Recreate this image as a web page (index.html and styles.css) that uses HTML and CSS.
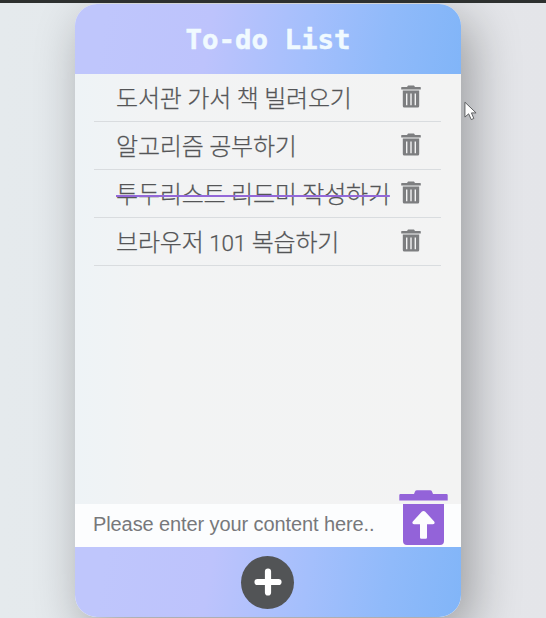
FILE: index.html
```html
<!DOCTYPE html>
<html lang="ko">
<head>
<meta charset="utf-8">
<title>To-do List</title>
<link rel="stylesheet" href="styles.css">
</head>
<body>
<svg class="defs" aria-hidden="true">
  <symbol id="trash" viewBox="0 0 20 23">
    <path fill-rule="evenodd" d="M0.8 2H6l1-1.4h6L14 2h5.2q.6 0 .6.6v2H.2v-2q0-.6.6-.6zM1.8 5.400h16.4V21q0 1.500-1.500 1.500H3.300Q1.800 22.500 1.800 21zM5 8.400v11.800h1.400V8.400zM9.300 8.400v11.800h1.400V8.400zM13.600 8.400v11.800H15V8.400z"/>
  </symbol>
</svg>
<main class="card">
  <header class="header"><h1 class="title">To-do List</h1></header>
  <ul class="list">
    <li class="item"><span class="text">도서관 가서 책 빌려오기</span><svg class="trash"><use href="#trash"/></svg></li>
    <li class="item"><span class="text">알고리즘 공부하기</span><svg class="trash"><use href="#trash"/></svg></li>
    <li class="item"><span class="text done">투두리스트 리드미 작성하기</span><svg class="trash"><use href="#trash"/></svg></li>
    <li class="item"><span class="text">브라우저 <span class="number">101</span> 복습하기</span><svg class="trash"><use href="#trash"/></svg></li>
  </ul>
  <div class="entry">
    <span class="placeholder">Please enter your content here..</span>
    <svg class="restore" viewBox="0 0 49 56">
      <path d="M1.500 4H15l1-2.500Q16.500.3 18 .3h13q1.500 0 2 1.200L34 4h13.500q1.200 0 1.200 1.200v5.300H.3V5.200Q.3 4 1.500 4z"/>
      <path fill-rule="evenodd" d="M4 14h41v37q0 4-4 4H8q-4 0-4-4zM24.500 21q-1 0-1.800.8L13.800 31.500q-1.300 2.300 1.200 2.800H21V47.500q0 1.300 1.300 1.300h4.400q1.300 0 1.300-1.300V34.300h6q2.500-.5 1.200-2.800l-8.900-9.700Q25.500 21 24.500 21z"/>
    </svg>
  </div>
  <footer class="footer">
    <div class="add"><svg class="plus" viewBox="0 0 28 28"><path d="M14 3.500v21M3.500 14h21"/></svg></div>
  </footer>
</main>
<svg class="cursor" viewBox="0 0 14 22"><path d="M1 1v16l4-3.500 2.800 6.200 2.800-1.200L8 12.500h5z"/></svg>
</body>
</html>
```
FILE: styles.css
```css
* { box-sizing: border-box; }
html { height: 100%; overflow: hidden; background: #e5e7ea; }
body {
  margin: 0;
  height: 618px;
  overflow: hidden;
  border-top: 3px solid #2d302f;
  background: linear-gradient(90deg, #e5eaed, #e4e5e9);
  font-family: Roboto, "Noto Sans CJK KR", sans-serif;
}
.defs { display: none; }
.card {
  display: flex;
  flex-direction: column;
  width: 386px;
  height: 613px;
  margin: 1px 0 0 75px;
  overflow: hidden;
  border-radius: 22px;
  background: linear-gradient(90deg, #eef3f6, #f2f3f4 20%, #f3f3f3);
  box-shadow: 10px 16px 50px 0 rgba(0, 0, 0, .33);
}
.header, .footer {
  display: flex;
  flex: none;
  align-items: center;
  justify-content: center;
  height: 70px;
  background: linear-gradient(100deg, #bfc6fc 8%, #bdc3fc 35%, #a4bffc 60%, #90bafa 80%, #81b5f8);
}
.title {
  margin: 2px 0 0;
  color: #f0faff;
  font: bold 27.400px/36px "DejaVu Sans Mono", monospace;
  -webkit-text-stroke: .5px #f0faff;
}
.list { flex: 1; margin: 0; padding: 0 20px 0 19px; list-style: none; }
.item {
  display: flex;
  align-items: center;
  justify-content: space-between;
  height: 48px;
  padding: 0 20px 0 22px;
  border-bottom: 1px solid #d9dcdf;
}
.text {
  margin-top: 2px;
  color: #545557;
  font-size: 24px;
  font-weight: 300;
  line-height: 34px;
  letter-spacing: -.2px;
  white-space: nowrap;
  -webkit-text-stroke: .25px #545557;
}
.number { font-size: 22.500px; }
.done { text-decoration: line-through #9368d8 2px; }
.trash { flex: none; width: 20px; height: 23px; margin-top: -3px; fill: #7d7e80; }
.entry {
  display: flex;
  flex: none;
  align-items: center;
  justify-content: space-between;
  height: 43px;
  padding: 0 13px 0 18px;
  background: #fcfdfe;
}
.placeholder {
  margin-top: -3px;
  color: #77787b;
  font: 20px/24px "Liberation Sans", sans-serif;
  letter-spacing: -.1px;
  white-space: nowrap;
}
.restore { flex: none; width: 49px; height: 56px; margin-top: -15px; fill: #9363d9; }
.add {
  display: flex;
  align-items: center;
  justify-content: center;
  width: 53px;
  height: 53px;
  margin-right: 1px;
  border-radius: 50%;
  background: #525456;
}
.plus { width: 28px; height: 28px; fill: none; stroke: #fff; stroke-width: 6.200; stroke-linecap: round; }
.cursor {
  position: absolute;
  left: 464px;
  top: 101px;
  width: 13px;
  height: 21px;
  fill: #fff;
  stroke: #55575a;
  stroke-width: 1;
}
```
